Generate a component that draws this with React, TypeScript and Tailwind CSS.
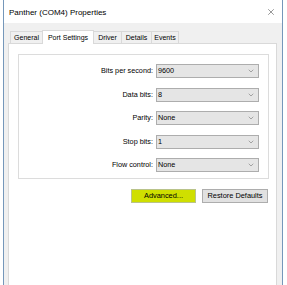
import { ChevronDown, X } from 'lucide-react';

const rows = [
  { label: 'Bits per second:', value: '9600' },
  { label: 'Data bits:', value: '8' },
  { label: 'Parity:', value: 'None' },
  { label: 'Stop bits:', value: '1' },
  { label: 'Flow control:', value: 'None' },
];

const tabs = [
  { name: 'General', w: 'w-[33px]' },
  { name: 'Port Settings', w: 'w-[52px]' },
  { name: 'Driver', w: 'w-[29px]' },
  { name: 'Details', w: 'w-[31px]' },
  { name: 'Events', w: 'w-[28px]' },
];

export default function App() {
  return (
    <div
      className="w-[287px] h-[285px] bg-white overflow-hidden flex pl-[3px] pr-[4px] text-black"
      style={{ fontFamily: '"Liberation Sans", Arial, sans-serif' }}
    >
      <div className="w-[280px] h-[300px] border-x border-[#7597ba] flex flex-col">
        {/* title bar */}
        <div className="h-[23px] bg-white flex items-center justify-between pl-[5px] pr-[6px] shrink-0">
          <span className="text-[8px] leading-none mt-[2px]">Panther (COM4) Properties</span>
          <X size={10} strokeWidth={1.2} className="text-[#333] mt-[1px]" />
        </div>

        <div className="flex-1 bg-[#f0f0f0] pl-[4px] pr-[5px] flex flex-col">
          {/* tabs */}
          <div className="flex items-end pt-[6px] pl-[2px] h-[20px] shrink-0">
            {tabs.map((t, i) => {
              const active = t.name === 'Port Settings';
              return (
                <div
                  key={t.name}
                  className={
                    active
                      ? `${t.w} h-[14px] -ml-px bg-white border border-b-0 border-[#d9d9d9] relative z-10 -mb-px flex items-center justify-center text-[7px] leading-none`
                      : `${t.w} h-[12px] ${i === 0 ? '' : '-ml-px'} bg-[#f0f0f0] border border-b-0 border-[#d9d9d9] flex items-center justify-center text-[7px] leading-none`
                  }
                >
                  {t.name}
                </div>
              );
            })}
          </div>

          {/* panel */}
          <div className="flex-1 bg-white border border-[#d9d9d9] pt-[10px] pl-[9px] pr-[7px]">
            <div className="border border-[#dcdcdc] pt-[9px] pb-[6px] flex flex-col gap-[9.5px]">
              {rows.map((r) => (
                <div key={r.label} className="flex items-center justify-end pr-[9px] h-[14px]">
                  <span className="text-[7.25px] leading-none mr-[3px]">{r.label}</span>
                  <div className="w-[103px] h-[14px] bg-[#e5e5e5] border border-[#adadad] flex items-center justify-between pl-[1px] pr-[3px]">
                    <span className="text-[7.25px] leading-none">{r.value}</span>
                    <ChevronDown size={8} strokeWidth={1.4} className="text-[#555]" />
                  </div>
                </div>
              ))}
            </div>

            <div className="flex justify-end gap-[6px] mt-[10px] pr-[1px]">
              <div className="w-[65px] h-[14px] bg-[#cfdf00] border border-[#b9c38a] flex items-center justify-center text-[7.4px] leading-none">
                Advanced...
              </div>
              <div className="w-[66px] h-[14px] bg-[#e1e1e1] border border-[#adadad] flex items-center justify-center text-[7.4px] leading-none">
                Restore Defaults
              </div>
            </div>
          </div>
        </div>
      </div>
    </div>
  );
}
